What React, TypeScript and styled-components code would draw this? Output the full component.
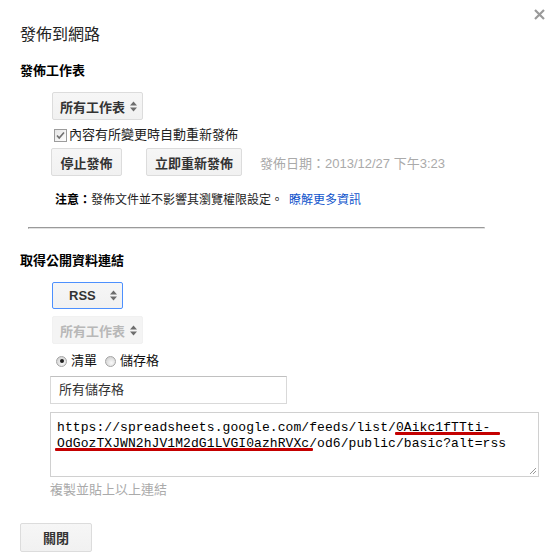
import styled, { createGlobalStyle } from 'styled-components';

const GlobalStyle = createGlobalStyle`
  html, body {
    margin: 0;
    padding: 0;
    background: #fff;
  }
  body {
    font-family: "Liberation Sans", Arial, "Noto Sans CJK TC", sans-serif;
    font-size: 13px;
    color: #222;
  }
`;

const Dialog = styled.div`
  width: 551px;
  height: 557px;
  box-sizing: border-box;
  padding: 9px 6px 0 20px;
  background: #fff;
  overflow: hidden;
`;

const TitleRow = styled.div`
  display: flex;
  justify-content: space-between;
  align-items: flex-start;
`;

const Title = styled.div`
  margin-top: 16px;
  font-size: 16px;
  line-height: 20px;
  color: #222;
`;

const CloseX = styled.svg`
  width: 11px;
  height: 11px;
  cursor: pointer;
`;

const SectionTitle = styled.div<{ $top: number }>`
  margin-top: ${p => p.$top}px;
  font-size: 13px;
  line-height: 16px;
  font-weight: bold;
  color: #000;
`;

const Body = styled.div`
  display: flex;
  flex-direction: column;
  align-items: flex-start;
  padding-left: 30px;
`;

const Select = styled.div<{ $w: number; $pl: number; $h?: number; $focus?: boolean; $disabled?: boolean; $top: number }>`
  display: flex;
  align-items: center;
  box-sizing: border-box;
  width: ${p => p.$w}px;
  height: ${p => p.$h ?? 28}px;
  margin: ${p => p.$top}px 0 0 2px;
  padding: 0 5px 0 ${p => p.$pl}px;
  border: 1px solid ${p => (p.$focus ? '#4d90fe' : p.$disabled ? '#f1f1f1' : '#dcdcdc')};
  border-radius: 2px;
  background: ${p => (p.$disabled ? '#f4f4f4' : 'linear-gradient(#f6f6f6, #f1f1f1)')};
  color: ${p => (p.$disabled ? '#b8b8b8' : '#333')};
  font-weight: bold;
  font-size: 13px;
  cursor: default;
`;

const Arrows = styled.svg`
  width: 7px;
  height: 11px;
  margin-left: auto;
`;

const CheckRow = styled.label`
  display: flex;
  align-items: center;
  gap: 2px;
  margin: 7px 0 0 4px;
  line-height: 16px;
  color: #222;
`;

const ButtonRow = styled.div`
  display: flex;
  align-items: center;
  margin: 5px 0 0 1px;
`;

const Button = styled.button<{ $gap?: number }>`
  box-sizing: border-box;
  height: 28px;
  min-width: 71px;
  margin-right: ${p => p.$gap ?? 0}px;
  padding: 0 8px;
  border: 1px solid #dcdcdc;
  border-radius: 2px;
  background: linear-gradient(#f6f6f6, #f1f1f1);
  color: #333;
  font-family: inherit;
  font-size: 13px;
  font-weight: bold;
  cursor: default;
`;

const Stamp = styled.span`
  color: #aaa;
  font-size: 13px;
`;

const Note = styled.div`
  margin: 16px 0 0 5px;
  font-size: 12px;
  line-height: 16px;
  color: #222;
`;

const NoteLabel = styled.b`
  color: #000;
`;

const Link = styled.a`
  margin-left: 6px;
  color: #15c;
  text-decoration: none;
  cursor: pointer;
`;

const Divider = styled.hr`
  box-sizing: border-box;
  width: 457px;
  height: 2px;
  margin: 19px 0 0 8px;
  border: 0;
  border-top: 1px solid #9a9a9a;
  border-left: 1px solid #9a9a9a;
  border-bottom: 1px solid #e2e2e2;
  border-right: 1px solid #e2e2e2;
`;

const RadioRow = styled.div`
  display: flex;
  align-items: center;
  margin: 9px 0 0 6px;
  line-height: 16px;
  color: #111;
`;

const Radio = styled.span<{ $checked?: boolean }>`
  display: inline-flex;
  align-items: center;
  justify-content: center;
  box-sizing: border-box;
  width: 11px;
  height: 11px;
  margin-right: 4px;
  border-radius: 50%;
  border: 1px solid #a5a5a5;
  background: radial-gradient(circle at 60% 65%, #fafafa 0%, #d4d4d4 75%);
  &::after {
    content: '';
    display: ${p => (p.$checked ? 'block' : 'none')};
    width: 4px;
    height: 4px;
    border-radius: 50%;
    background: #222;
  }
`;

const RadioText = styled.span`
  margin-right: 8px;
`;

const TextInput = styled.div`
  box-sizing: border-box;
  width: 237px;
  height: 28px;
  margin-top: 7px;
  padding: 0 8px;
  border: 1px solid #d9d9d9;
  border-top-color: #c0c0c0;
  line-height: 26px;
  color: #333;
`;

const UrlBox = styled.div`
  position: relative;
  box-sizing: border-box;
  width: 489px;
  height: 65px;
  margin-top: 8px;
  padding: 7px 6px;
  border: 1px solid #d0d0d0;
  font-family: "Liberation Mono", "Courier New", monospace;
  font-size: 13px;
  line-height: 16px;
  letter-spacing: 0.08px;
  color: #000;
  white-space: pre;
`;

const Marked = styled.span<{ $l: number; $r: number }>`
  position: relative;
  &::after {
    content: '';
    position: absolute;
    left: -${p => p.$l}px;
    right: -${p => p.$r}px;
    bottom: 0;
    height: 3px;
    background: #c40000;
    border-radius: 1px;
  }
`;

const Grip = styled.svg`
  position: absolute;
  right: 1px;
  bottom: 1px;
  width: 8px;
  height: 8px;
`;

const Help = styled.div`
  margin-top: 5px;
  line-height: 16px;
  color: #aaa;
`;

const CloseButton = styled(Button)`
  height: 29px;
  min-width: 72px;
  margin-top: 25px;
`;

const UpDown = () => (
  <Arrows viewBox="0 0 7 11">
    <polygon points="0,4.5 3.5,0.5 7,4.5" fill="#6d6d6d" />
    <polygon points="0,6.5 3.5,10.5 7,6.5" fill="#6d6d6d" />
  </Arrows>
);

const CheckBox = () => (
  <svg width="13" height="13" viewBox="0 0 13 13">
    <defs>
      <linearGradient id="cb" x1="0" y1="0" x2="1" y2="1">
        <stop offset="0" stopColor="#e4e4e4" />
        <stop offset="1" stopColor="#fff" />
      </linearGradient>
    </defs>
    <rect x="0.5" y="0.5" width="12" height="12" fill="url(#cb)" stroke="#9c9c9c" />
    <path d="M3 6.5 L5.2 9 L10 3.5" fill="none" stroke="#6f6f6f" strokeWidth="1.6" />
  </svg>
);

export default function App() {
  return (
    <>
      <GlobalStyle />
      <Dialog>
        <TitleRow>
          <Title>發佈到網路</Title>
          <CloseX viewBox="0 0 11 11">
            <path d="M1 1 L10 10 M10 1 L1 10" stroke="#9a9a9a" strokeWidth="2.2" />
          </CloseX>
        </TitleRow>

        <SectionTitle $top={18}>發佈工作表</SectionTitle>
        <Body>
          <Select $w={91} $pl={7} $top={13}>
            所有工作表
            <UpDown />
          </Select>
          <CheckRow>
            <CheckBox />
            內容有所變更時自動重新發佈
          </CheckRow>
          <ButtonRow>
            <Button $gap={24}>停止發佈</Button>
            <Button $gap={18}>立即重新發佈</Button>
            <Stamp>發佈日期：2013/12/27 下午3:23</Stamp>
          </ButtonRow>
          <Note>
            <NoteLabel>注意：</NoteLabel>發佈文件並不影響其瀏覽權限設定。
            <Link>瞭解更多資訊</Link>
          </Note>
        </Body>

        <Divider />

        <SectionTitle $top={24}>取得公開資料連結</SectionTitle>
        <Body>
          <Select $w={71} $pl={16} $h={27} $focus $top={13}>
            RSS
            <UpDown />
          </Select>
          <Select $w={91} $pl={7} $disabled $top={7}>
            所有工作表
            <UpDown />
          </Select>
          <RadioRow>
            <Radio $checked />
            <RadioText>清單</RadioText>
            <Radio />
            <span>儲存格</span>
          </RadioRow>
          <TextInput>所有儲存格</TextInput>
          <UrlBox>
            {'https://spreadsheets.google.com/feeds/list/'}
            <Marked $l={1} $r={10}>0Aikc1fTTti-</Marked>
            {'\n'}
            <Marked $l={2} $r={4}>OdGozTXJWN2hJV1M2dG1LVGI0azhRVXc</Marked>
            {'/od6/public/basic?alt=rss'}
            <Grip viewBox="0 0 8 8">
              <path d="M7 1 L1 7 M7 4 L4 7" stroke="#9a9a9a" strokeWidth="1" />
            </Grip>
          </UrlBox>
          <Help>複製並貼上以上連結</Help>
        </Body>

        <CloseButton>關閉</CloseButton>
      </Dialog>
    </>
  );
}
